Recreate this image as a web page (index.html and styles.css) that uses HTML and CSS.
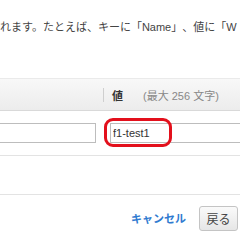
FILE: index.html
```html
<!DOCTYPE html>
<html lang="ja">
<head>
<meta charset="utf-8">
<link rel="stylesheet" href="styles.css">
</head>
<body>
<div class="page">
  <p class="intro">れます。たとえば、キーに「Name」、値に「W</p>
  <div class="table">
    <div class="thead">
      <div class="th key"></div>
      <div class="th val"><span class="label">値</span><span class="hint">(最大 256 文字)</span></div>
    </div>
    <div class="trow">
      <div class="td key"><input class="field" type="text" value=""></div>
      <div class="td val">
        <input class="field" type="text" value="f1-test1">
        <span class="mark"></span>
      </div>
    </div>
    <div class="spacer"></div>
  </div>
  <div class="footer">
    <a class="cancel" href="#">キャンセル</a>
    <button class="btn">戻る</button>
  </div>
</div>
</body>
</html>
```
FILE: styles.css
```css
html, body {
  margin: 0;
  padding: 0;
  background: #fff;
}
body {
  width: 240px;
  height: 240px;
  overflow: hidden;
  font-family: "Liberation Sans", "Noto Sans CJK JP", sans-serif;
  color: #444;
  text-spacing-trim: space-all;
}
.page {
  width: 240px;
}
.intro {
  margin: 0;
  padding-top: 19px;
  height: 78px;
  box-sizing: border-box;
  font-size: 11px;
  line-height: 16px;
  white-space: nowrap;
  color: #444;
}
.table {
  width: 240px;
}
.thead {
  display: grid;
  grid-template-columns: 103px 1fr;
  background: linear-gradient(#f8f8f8, #ececec);
  border-top: 1px solid #eaeaea;
  border-bottom: 1px solid #d9d9d9;
  box-sizing: border-box;
  height: 33px;
}
.th {
  display: flex;
  align-items: center;
  font-size: 11px;
}
.th.val {
  border-left: 1px solid #cfcfcf;
  height: 14px;
  align-self: center;
  padding-left: 8px;
  white-space: nowrap;
}
.label {
  color: #333;
  font-weight: bold;
  width: 31px;
}
.hint {
  color: #888;
}
.trow {
  display: grid;
  grid-template-columns: 104px 1fr;
  height: 45px;
  border-bottom: 1px solid #e3e3e3;
  box-sizing: border-box;
  padding-top: 12px;
}
.td {
  position: relative;
}
.field {
  display: block;
  box-sizing: border-box;
  height: 20px;
  border: 1px solid #bdbdbd;
  padding: 0 2px;
  font-family: "Liberation Sans", "Noto Sans CJK JP", sans-serif;
  font-size: 11px;
  color: #333;
  background: #fff;
  outline: none;
}
.td.key .field {
  width: 98px;
  margin-left: -2px;
}
.td.val .field {
  width: 140px;
  margin-left: 6px;
}
.mark {
  position: absolute;
  left: 0;
  top: -5px;
  width: 68px;
  height: 29px;
  box-sizing: border-box;
  border: 3px solid #e3101c;
  border-radius: 9px;
}
.spacer {
  height: 38px;
  border-bottom: 1px solid #e3e3e3;
}
.footer {
  display: flex;
  justify-content: flex-end;
  align-items: center;
  gap: 13px;
  padding: 10px 2px 0 0;
  height: 26px;
}
.cancel {
  color: #2f7ad0;
  font-weight: bold;
  font-size: 11px;
  text-decoration: none;
  font-family: "Noto Sans CJK JP", sans-serif;
}
.btn {
  box-sizing: border-box;
  height: 25px;
  width: 39px;
  border: 1px solid #c4c4c4;
  border-radius: 3px;
  background: linear-gradient(#fafafa, #e6e6e6);
  font-family: "Noto Sans CJK JP", sans-serif;
  font-size: 12px;
  color: #444;
  padding: 0;
}
```
